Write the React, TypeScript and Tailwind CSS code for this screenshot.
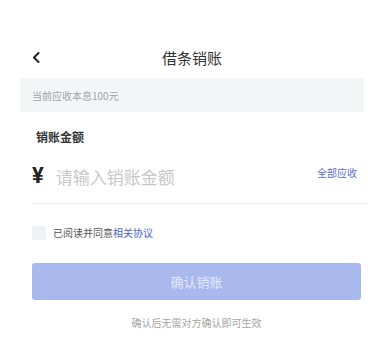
import React from "react";

const font = { fontFamily: '"Noto Sans CJK SC", "Noto Sans", sans-serif' };

const App: React.FC = () => {
  return (
    <div
      className="w-[384px] h-[344px] bg-white overflow-hidden font-['Noto_Sans_CJK_SC','Noto_Sans',sans-serif]"
      style={font}
    >
      {/* header */}
      <div className="pt-[37px]">
        <div className="relative h-[41px] flex items-center justify-center">
          <svg
            className="absolute left-[32px] top-[15px]"
            width="9"
            height="11"
            viewBox="0 0 9 11"
          >
            <polyline
              points="6.5,1 2,5.5 6.5,10"
              fill="none"
              stroke="#222"
              strokeWidth="2"
              strokeLinecap="round"
              strokeLinejoin="round"
            />
          </svg>
          <span className="text-[15px] leading-none text-[#333]">借条销账</span>
        </div>
      </div>

      {/* notice bar */}
      <div className="mx-[20px] h-[34px] bg-[#f4f5f7] flex items-center px-[12px]">
        <span className="text-[10px] text-[#a3a3a3]">当前应收本息100元</span>
      </div>

      <div className="pl-[32px] pr-[16px]">
        <div className="mt-[18px] h-[14px] flex items-center pl-[4px]">
          <span className="text-[12px] leading-none font-bold text-[#333]">销账金额</span>
        </div>

        <div className="mt-[16px] h-[32px] flex items-center pr-[11px]">
          <span
            className="text-[22px] leading-none font-bold text-[#222] font-['Roboto',sans-serif]"
            style={{ fontFamily: "Roboto, sans-serif" }}
          >
            ¥
          </span>
          <span className="ml-[12px] text-[17px] leading-none text-[#c8c8c8]">请输入销账金额</span>
          <span className="ml-auto -mt-[6px] text-[10px] leading-none text-[#5b6ed2]">全部应收</span>
        </div>

        <div className="mt-[11px] h-px bg-[#f1f1f3]" />

        <div className="mt-[22px] flex items-center">
          <div className="w-[14px] h-[14px] rounded-[2px] bg-[#f0f1f4]" />
          <span className="ml-[7px] text-[10px] leading-none text-[#555]">
            已阅读并同意<span className="text-[#4a5fcc]">相关协议</span>
          </span>
        </div>

        <button className="mt-[23px] w-[329px] h-[37px] rounded-[3px] bg-[#a9b9ee] flex items-center justify-center">
          <span className="text-[13px] leading-none text-[#e3e8fa]">确认销账</span>
        </button>

        <div className="mt-[16px] w-[329px] text-center text-[10px] leading-[14px] text-[#a5a5a5]">
          确认后无需对方确认即可生效
        </div>
      </div>
    </div>
  );
};

export default App;
